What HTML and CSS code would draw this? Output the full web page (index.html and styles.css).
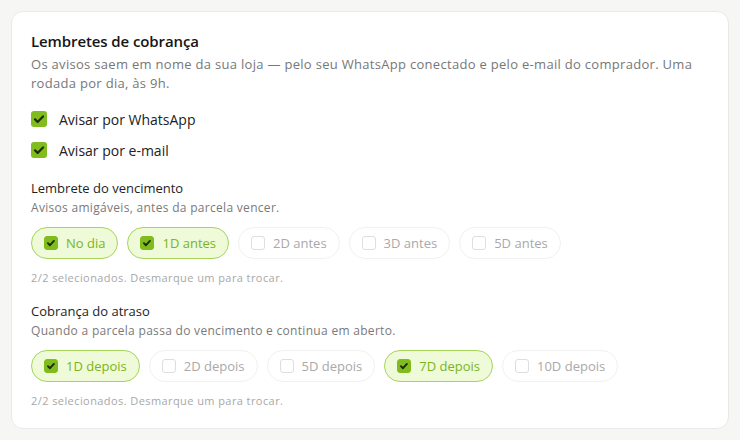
FILE: index.html
```html
<!DOCTYPE html>
<html lang="pt-BR">
<head>
<meta charset="utf-8">
<link rel="stylesheet" href="styles.css">
</head>
<body>
<div class="card">
  <h2 class="title">Lembretes de cobrança</h2>
  <p class="desc">Os avisos saem em nome da sua loja — pelo seu WhatsApp conectado e pelo e-mail do comprador. Uma rodada por dia, às 9h.</p>

  <div class="channels">
    <label class="channel"><span class="box on"><svg viewBox="0 0 16 16"><path d="M4 8.3l2.6 2.6L12 5.4" /></svg></span>Avisar por WhatsApp</label>
    <label class="channel"><span class="box on"><svg viewBox="0 0 16 16"><path d="M4 8.3l2.6 2.6L12 5.4" /></svg></span>Avisar por e-mail</label>
  </div>

  <section class="group">
    <h3 class="group-title">Lembrete do vencimento</h3>
    <p class="group-sub">Avisos amigáveis, antes da parcela vencer.</p>
    <div class="chips">
      <span class="chip sel"><span class="cbox"><svg viewBox="0 0 14 14"><path d="M3.4 7.2l2.4 2.4 4.6-5" /></svg></span>No dia</span>
      <span class="chip sel"><span class="cbox"><svg viewBox="0 0 14 14"><path d="M3.4 7.2l2.4 2.4 4.6-5" /></svg></span>1D antes</span>
      <span class="chip"><span class="cbox"></span>2D antes</span>
      <span class="chip"><span class="cbox"></span>3D antes</span>
      <span class="chip"><span class="cbox"></span>5D antes</span>
    </div>
    <p class="hint">2/2 selecionados. Desmarque um para trocar.</p>
  </section>

  <section class="group">
    <h3 class="group-title">Cobrança do atraso</h3>
    <p class="group-sub">Quando a parcela passa do vencimento e continua em aberto.</p>
    <div class="chips">
      <span class="chip sel"><span class="cbox"><svg viewBox="0 0 14 14"><path d="M3.4 7.2l2.4 2.4 4.6-5" /></svg></span>1D depois</span>
      <span class="chip"><span class="cbox"></span>2D depois</span>
      <span class="chip"><span class="cbox"></span>5D depois</span>
      <span class="chip sel"><span class="cbox"><svg viewBox="0 0 14 14"><path d="M3.4 7.2l2.4 2.4 4.6-5" /></svg></span>7D depois</span>
      <span class="chip"><span class="cbox"></span>10D depois</span>
    </div>
    <p class="hint">2/2 selecionados. Desmarque um para trocar.</p>
  </section>
</div>
</body>
</html>
```
FILE: styles.css
```css
* { box-sizing: border-box; }
html, body { margin: 0; padding: 0; }
body {
  background: #f6f6f5;
  padding: 11px;
  font-family: "Open Sans", "DejaVu Sans", sans-serif;
  color: #1e1e1e;
}
.card {
  width: 718px;
  background: #fff;
  border: 1px solid #e9e9e7;
  border-radius: 12px;
  padding: 19px 19px 19px;
}
.title {
  margin: 0;
  font-size: 15px;
  line-height: 20px;
  font-weight: 600;
  color: #161616;
  letter-spacing: -0.1px;
}
.desc {
  margin: 4px 0 0;
  font-size: 13px;
  line-height: 19px;
  color: #777;
  letter-spacing: 0.3px;
}
.channels {
  margin-top: 14px;
  display: flex;
  flex-direction: column;
  gap: 7px;
}
.channel {
  display: flex;
  align-items: center;
  gap: 12px;
  height: 24px;
  font-size: 14px;
  color: #222;
}
.box {
  width: 16px;
  height: 16px;
  border-radius: 3px;
  background: #80bc1e;
  display: flex;
  align-items: center;
  justify-content: center;
}
.box svg { width: 16px; height: 16px; }
.box svg path, .cbox svg path {
  fill: none;
  stroke: #1d2a0c;
  stroke-width: 2.2;
  stroke-linecap: round;
  stroke-linejoin: round;
}
.group { margin-top: 17px; }
.group + .group { margin-top: 16px; }
.group-title {
  margin: 0;
  font-size: 13px;
  line-height: 18px;
  font-weight: 500;
  color: #1e1e1e;
}
.group-sub {
  margin: 2px 0 0;
  font-size: 12px;
  line-height: 17px;
  color: #7a7a7a;
  letter-spacing: 0.3px;
}
.chips {
  margin-top: 11px;
  display: flex;
  gap: 9px;
}
.chip {
  height: 32px;
  display: inline-flex;
  align-items: center;
  gap: 8px;
  padding: 0 12px 0 12px;
  border: 1px solid #f1f1ef;
  border-radius: 16px;
  font-size: 13px;
  color: #a9a9a9;
  background: #fff;
}
.chip .cbox {
  width: 14px;
  height: 14px;
  border: 1px solid #dedede;
  border-radius: 3px;
  background: #fff;
  display: flex;
  align-items: center;
  justify-content: center;
}
.chip.sel {
  background: #eefad8;
  border-color: #a6d55c;
  color: #7bb51c;
}
.chip.sel .cbox {
  background: #80bc1e;
  border-color: #80bc1e;
}
.cbox svg { width: 14px; height: 14px; }
.hint {
  margin: 11px 0 0;
  font-size: 11px;
  line-height: 16px;
  color: #a8a8a8;
  letter-spacing: 0.42px;
}
```
